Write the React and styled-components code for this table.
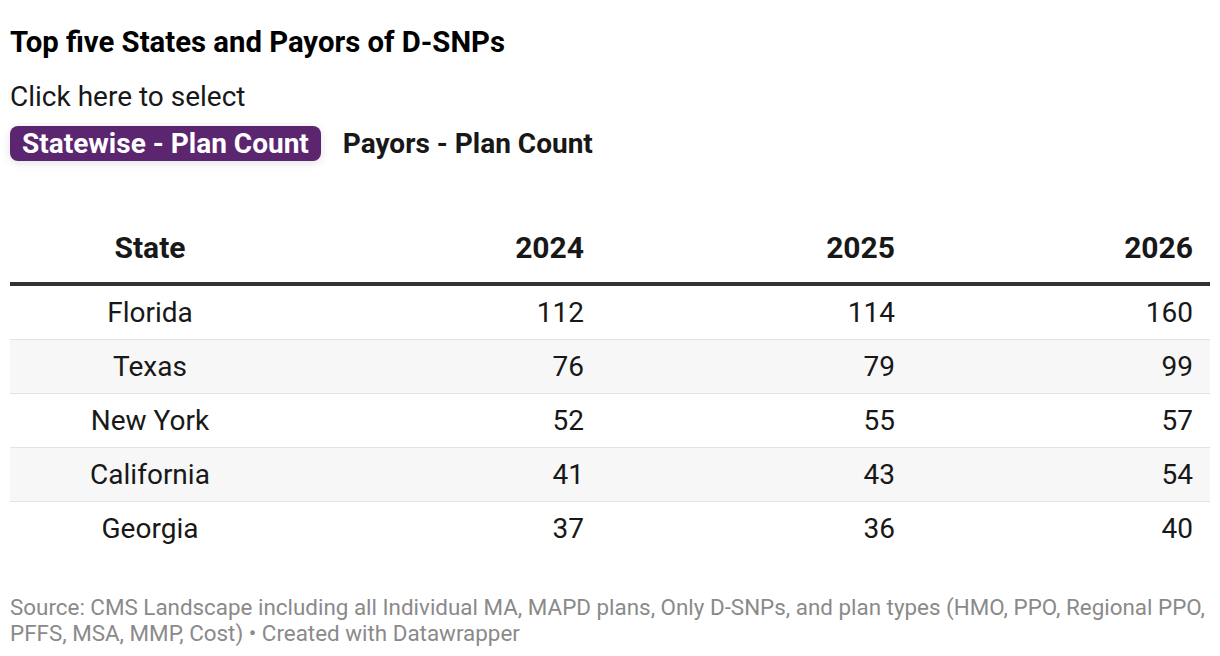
import React from "react";
import styled, { createGlobalStyle } from "styled-components";

const Global = createGlobalStyle`
  html, body { margin: 0; padding: 0; background: #fff; }
  body { font-family: Roboto, "Liberation Sans", sans-serif; color: #181818; }
`;

const Page = styled.div`
  padding: 24px 10px 0 10px;
  width: 1200px;
`;

const Title = styled.h1`
  margin: 0;
  font-size: 29.3px;
  font-weight: 700;
  line-height: 36px;
  color: #000;
`;

const Prompt = styled.div`
  margin-top: 20px;
  font-size: 28px;
  line-height: 34px;
  color: #181818;
`;

const Tabs = styled.div`
  display: flex;
  gap: 22px;
  align-items: center;
  margin-top: 12px;
`;

const Tab = styled.button`
  border: none;
  font-family: inherit;
  font-size: 28px;
  font-weight: 700;
  line-height: 35px;
  height: 35px;
  padding: 0 ${(p) => (p.$active ? "12px" : "0")};
  border-radius: 8px;
  background: ${(p) => (p.$active ? "#5c2570" : "transparent")};
  color: ${(p) => (p.$active ? "#fff" : "#181818")};
  box-shadow: ${(p) => (p.$active ? "0 2px 8px rgba(0,0,0,0.12)" : "none")};
  cursor: pointer;
`;

const Table = styled.div`
  margin-top: 57px;
  display: grid;
  grid-template-columns: 280px 304px 311px 1fr;
`;

const Row = styled.div`
  display: contents;
`;

const Cell = styled.div`
  display: flex;
  align-items: center;
  justify-content: ${(p) => (p.$center ? "center" : "flex-end")};
  padding-right: ${(p) => (p.$center ? "0" : p.$last ? "17px" : "10px")};
  padding-bottom: ${(p) => (p.$head ? "4px" : "0")};
  font-size: ${(p) => (p.$head ? "30px" : "28px")};
  line-height: 32px;
  font-weight: ${(p) => (p.$head ? 700 : 400)};
  color: #181818;
  background: ${(p) => (p.$alt ? "#f7f7f7" : "transparent")};
  border-bottom: ${(p) =>
    p.$head ? "4px solid #333" : p.$noBorder ? "none" : "1px solid #e3e3e3"};
  box-sizing: ${(p) => (p.$head ? "border-box" : "content-box")};
  height: ${(p) => (p.$head ? "68px" : "53px")};
`;

const Footer = styled.p`
  margin: 39px 0 0 0;
  font-size: 22.4px;
  line-height: 26px;
  color: #8a8a8a;
`;

const data = [
  ["Florida", 112, 114, 160],
  ["Texas", 76, 79, 99],
  ["New York", 52, 55, 57],
  ["California", 41, 43, 54],
  ["Georgia", 37, 36, 40],
];

export default function App() {
  return (
    <>
      <Global />
      <Page>
        <Title>Top five States and Payors of D-SNPs</Title>
        <Prompt>Click here to select</Prompt>
        <Tabs>
          <Tab $active>Statewise - Plan Count</Tab>
          <Tab>Payors - Plan Count</Tab>
        </Tabs>
        <Table>
          <Row>
            <Cell $head $center>State</Cell>
            <Cell $head>2024</Cell>
            <Cell $head>2025</Cell>
            <Cell $head $last>2026</Cell>
          </Row>
          {data.map((r, i) => (
            <Row key={r[0]}>
              {r.map((v, j) => (
                <Cell
                  key={j}
                  $center={j === 0}
                  $last={j === 3}
                  $alt={i % 2 === 1}
                  $noBorder={i === data.length - 1}
                >
                  {v}
                </Cell>
              ))}
            </Row>
          ))}
        </Table>
        <Footer>
          Source: CMS Landscape including all Individual MA, MAPD plans, Only D-SNPs, and plan types (HMO, PPO, Regional PPO, PFFS, MSA, MMP, Cost) • Created with Datawrapper
        </Footer>
      </Page>
    </>
  );
}
